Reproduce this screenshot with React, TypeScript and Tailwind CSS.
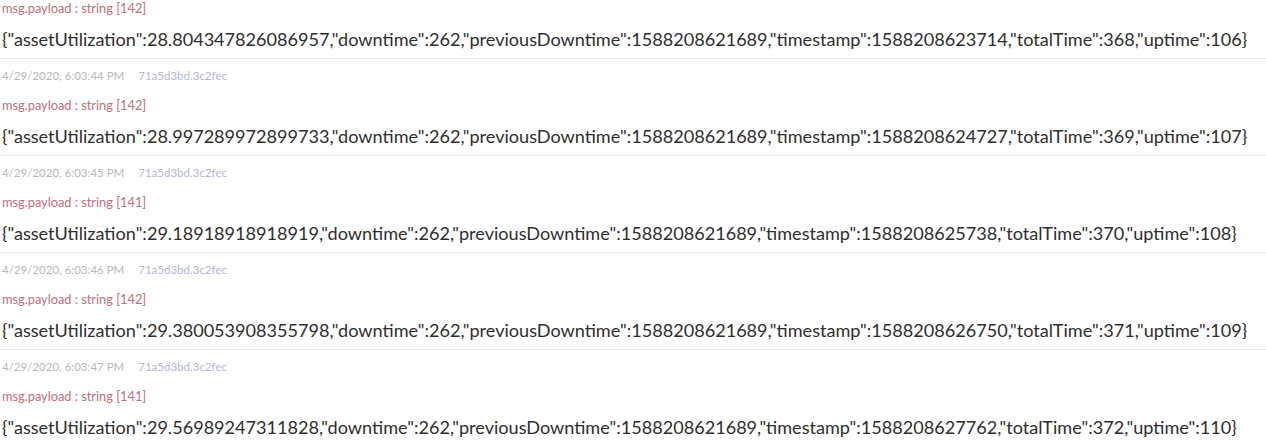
const entries = [
  { time: '4/29/2020, 6:03:43 PM', len: 142, json: '{"assetUtilization":28.804347826086957,"downtime":262,"previousDowntime":1588208621689,"timestamp":1588208623714,"totalTime":368,"uptime":106}' },
  { time: '4/29/2020, 6:03:44 PM', len: 142, json: '{"assetUtilization":28.997289972899733,"downtime":262,"previousDowntime":1588208621689,"timestamp":1588208624727,"totalTime":369,"uptime":107}' },
  { time: '4/29/2020, 6:03:45 PM', len: 141, json: '{"assetUtilization":29.18918918918919,"downtime":262,"previousDowntime":1588208621689,"timestamp":1588208625738,"totalTime":370,"uptime":108}' },
  { time: '4/29/2020, 6:03:46 PM', len: 142, json: '{"assetUtilization":29.380053908355798,"downtime":262,"previousDowntime":1588208621689,"timestamp":1588208626750,"totalTime":371,"uptime":109}' },
  { time: '4/29/2020, 6:03:47 PM', len: 141, json: '{"assetUtilization":29.56989247311828,"downtime":262,"previousDowntime":1588208621689,"timestamp":1588208627762,"totalTime":372,"uptime":110}' },
];

export default function App() {
  return (
    <div className="w-[1266px] h-[440px] overflow-hidden bg-white" style={{ fontFamily: 'Lato, "Open Sans", sans-serif' }}>
      <div className="-mt-[38px]">
        {entries.map((e) => (
          <div key={e.time} className="px-[2px] pb-[8px] border-b border-[#e9e9e9]">
            <div className="mt-[10px] h-[14px] flex items-center gap-[14px] text-[11.5px] leading-[14px] text-[#b8b8b8]">
              <span>{e.time}</span>
              <span className="text-[#b4b6d4]">71a5d3bd.3c2fec</span>
            </div>
            <div className="mt-[14px] h-[16px] text-[12.8px] leading-[16px] text-[#bf6f79]">
              msg.payload : string [{e.len}]
            </div>
            <div className="mt-[12px] h-[22px] text-[18.1px] leading-[22px] text-[#2e2e2e] whitespace-nowrap">
              {e.json}
            </div>
          </div>
        ))}
      </div>
    </div>
  );
}
